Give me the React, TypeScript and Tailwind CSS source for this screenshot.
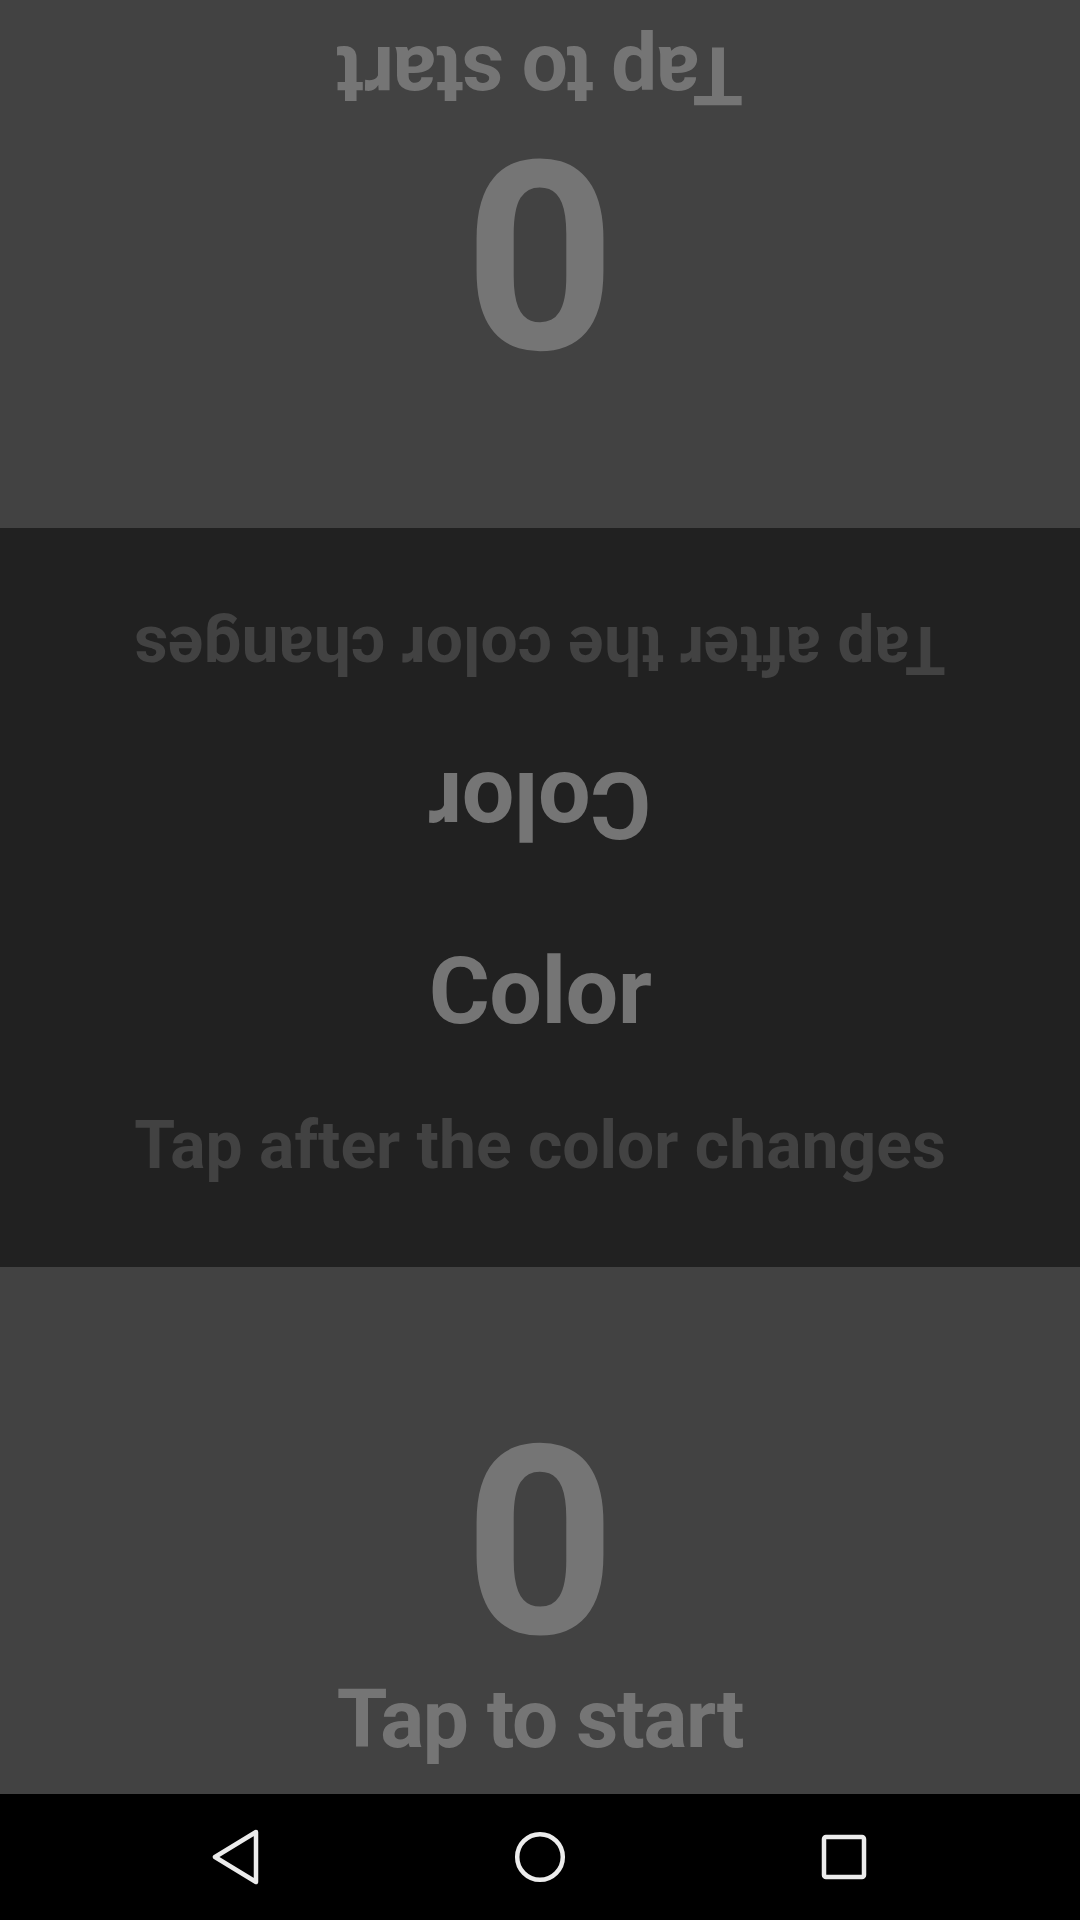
import React from "react";

const PlayerPanel = ({ flipped }: { flipped?: boolean }) => {
  return (
    <div
      className={`flex flex-col items-center justify-end pb-[34px] bg-[#424242] ${
        flipped ? "h-[528px] rotate-180" : "h-[527px]"
      }`}>
      <p className="text-[264px] leading-none font-bold text-[#757575]">0</p>
      <p className="mt-[3px] text-[82px] leading-none font-bold tracking-[-1.3px] text-[#757575]">
        Tap to start
      </p>
    </div>
  );
};

const ColorHalf = ({ flipped }: { flipped?: boolean }) => {
  return (
    <div
      className={`flex flex-1 flex-col items-center pt-[47px] ${
        flipped ? "rotate-180" : ""
      }`}>
      <p className="text-[93.5px] leading-none font-bold tracking-[-0.6px] text-[#757575]">
        Color
      </p>
      <p className="mt-[75px] text-[66px] leading-none font-bold text-[#424242]">
        Tap after the color changes
      </p>
    </div>
  );
};

const NavBar = () => {
  return (
    <div className="flex h-[126px] items-center justify-center bg-black">
      <div className="flex w-[304px] justify-center">
        <svg width="60" height="60" viewBox="0 0 60 60">
          <path
            d="M50 5 L9 30 L50 55 Z"
            fill="none"
            stroke="#ececec"
            strokeWidth="4.5"
            strokeLinejoin="round"
          />
        </svg>
      </div>
      <div className="flex w-[304px] justify-center">
        <svg width="60" height="60" viewBox="0 0 60 60">
          <circle
            cx="30"
            cy="30"
            r="22.8"
            fill="none"
            stroke="#ececec"
            strokeWidth="4.5"
          />
        </svg>
      </div>
      <div className="flex w-[304px] justify-center">
        <svg width="60" height="60" viewBox="0 0 60 60">
          <rect
            x="10"
            y="10"
            width="40"
            height="40"
            rx="2"
            fill="none"
            stroke="#ececec"
            strokeWidth="4.5"
          />
        </svg>
      </div>
    </div>
  );
};

const App = () => {
  return (
    <div className="flex h-[1920px] w-[1080px] flex-col overflow-hidden font-['Roboto',sans-serif]">
      <PlayerPanel flipped />
      <div className="flex h-[739px] flex-col bg-[#212121]">
        <ColorHalf flipped />
        <ColorHalf />
      </div>
      <PlayerPanel />
      <NavBar />
    </div>
  );
};

export default App;
